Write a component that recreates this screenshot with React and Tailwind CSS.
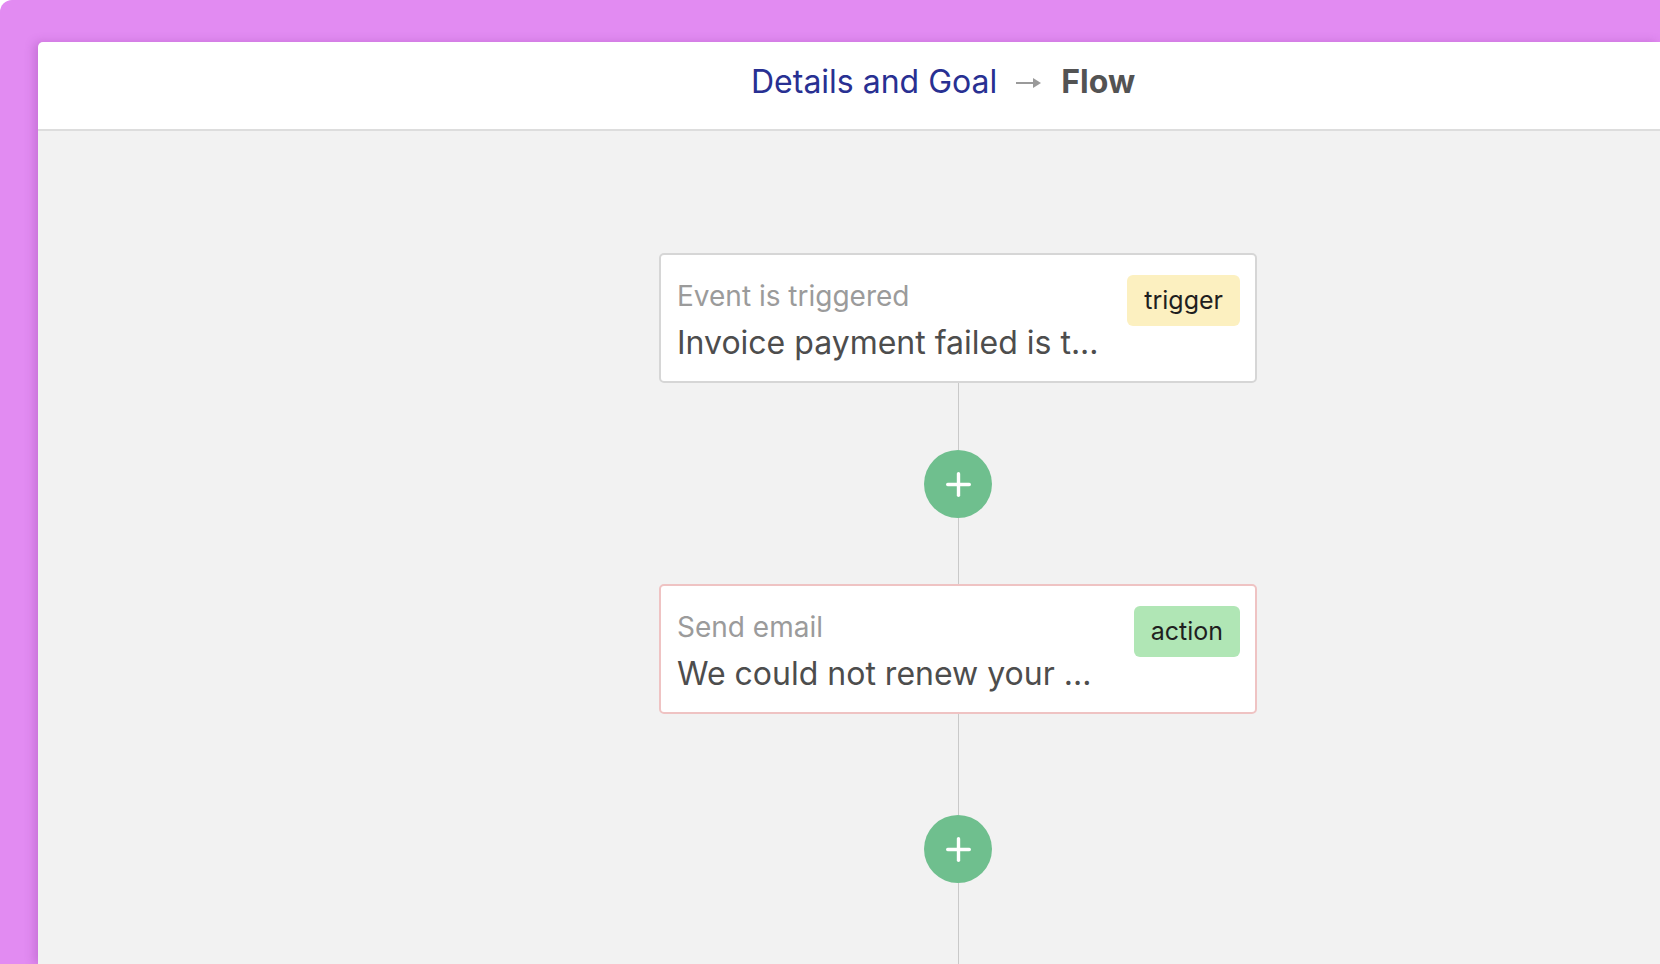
import { Plus } from "lucide-react";

const Connector = ({ h }) => (
  <div className={`w-px bg-[#c9c9c9] ${h}`}></div>
);

const AddButton = () => (
  <button className="w-[68px] h-[68px] rounded-full bg-[#6fbf8e] flex items-center justify-center shrink-0">
    <Plus className="text-white w-[37px] h-[37px]" strokeWidth={2.2} />
  </button>
);

const FlowCard = ({ title, text, tag, tagClass, borderClass }) => (
  <div
    className={`w-[598px] h-[130px] bg-white rounded-[5px] border-2 ${borderClass} flex items-start justify-between pl-[16px] pr-[15px] shrink-0`}
  >
    <div className="flex flex-col pt-[21px]">
      <span className="text-[28px] leading-[40px] text-[#9b9b9b]">{title}</span>
      <span className="text-[32px] leading-[48px] text-[#4d4d4d] mt-[3px]">
        {text}
      </span>
    </div>
    <span
      className={`mt-[20px] h-[51px] px-[17px] rounded-[6px] flex items-center text-[25px] text-[#1f1f1f] ${tagClass}`}
    >
      {tag}
    </span>
  </div>
);

export default function App() {
  return (
    <div
      className="h-screen w-full overflow-hidden bg-[#e28bf2] rounded-tl-[12px] pt-[42px] pl-[38px] flex"
      style={{ fontFamily: "Inter, 'Noto Sans', sans-serif" }}
    >
      <div className="flex-1 bg-white rounded-tl-[5px] shadow-[-4px_0_10px_rgba(120,40,140,0.25)] flex flex-col">
        {/* header */}
        <div className="h-[89px] border-b-2 border-[#dddddd] flex items-center pl-[713px] pb-[7px] shrink-0">
          <span className="text-[32px] text-[#283092]">Details and Goal</span>
          <svg
            width="26"
            height="12"
            viewBox="0 0 26 12"
            className="mx-[19px] mt-[2px]"
          >
            <rect x="0" y="5" width="18" height="2" fill="#9a9a9a" />
            <path d="M17 1 L25 6 L17 11 Z" fill="#9a9a9a" />
          </svg>
          <span className="text-[32px] font-bold text-[#535353]">Flow</span>
        </div>

        {/* canvas */}
        <div className="flex-1 bg-[#f2f2f2] pl-[621px] pt-[122px] flex flex-col">
          <div className="w-[598px] flex flex-col items-center h-full">
            <FlowCard
              title="Event is triggered"
              text="Invoice payment failed is t..."
              tag="trigger"
              tagClass="bg-[#fcf0c0]"
              borderClass="border-[#d6d6d6]"
            />
            <Connector h="h-[67px]" />
            <AddButton />
            <Connector h="h-[66px]" />
            <FlowCard
              title="Send email"
              text="We could not renew your ..."
              tag="action"
              tagClass="bg-[#b0e6b5]"
              borderClass="border-[#efc3c3]"
            />
            <Connector h="h-[101px]" />
            <AddButton />
            <Connector h="flex-1" />
          </div>
        </div>
      </div>
    </div>
  );
}
